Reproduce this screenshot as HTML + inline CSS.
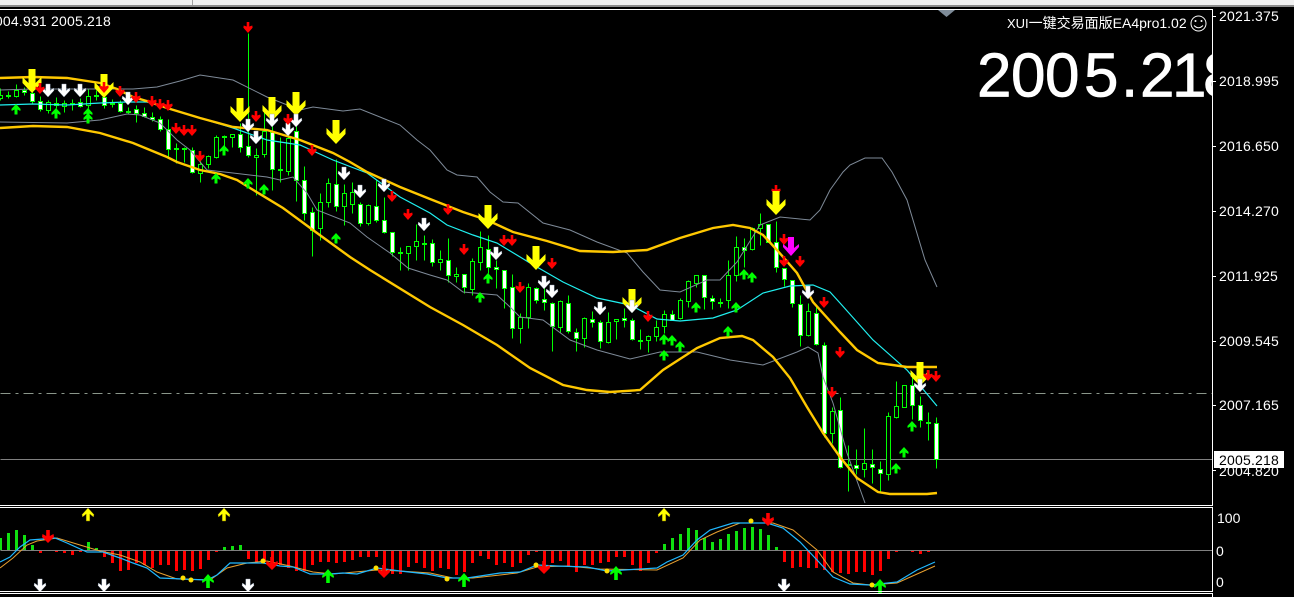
<!DOCTYPE html>
<html><head><meta charset="utf-8"><style>
html,body{margin:0;padding:0;background:#000;width:1294px;height:597px;overflow:hidden}
svg{display:block}
text{font-family:"Liberation Sans","Noto Sans CJK SC",sans-serif;fill:#fff}
</style></head><body>
<svg width="1294" height="597" viewBox="0 0 1294 597" xmlns="http://www.w3.org/2000/svg">
<defs>
<polygon id="y" points="-3.5,0 3.5,0 3.5,14 9.5,8 9.5,14 0,24 -9.5,14 -9.5,8 -3.5,14" fill="#ff0"/>
<polygon id="m" points="-3,0 3,0 3,11 8,7 8,10 0,19 -8,10 -8,7 -3,11" fill="#f0f"/>
<polygon id="w" points="-2.2,0 2.2,0 2.2,6.5 5.5,4 6,6.5 0,13 -6,6.5 -5.5,4 -2.2,6.5" fill="#fff" stroke="#8a9ab0" stroke-width=".4"/>
<polygon id="r" points="-1.3,0 1.3,0 1.3,4.5 4.3,3.5 4.6,5.8 0,11 -4.6,5.8 -4.3,3.5 -1.3,4.5" fill="#f00"/>
<polygon id="g" points="0,0 4.6,5 4.3,7 1.5,5.5 1.5,10.5 -1.5,10.5 -1.5,5.5 -4.3,7 -4.6,5" fill="#0f0"/>
<polygon id="yu" points="0,0 6,6.5 5.5,9 1.8,6 1.8,13 -1.8,13 -1.8,6 -5.5,9 -6,6.5" fill="#ff0" stroke="#807000" stroke-width=".5"/>
<polygon id="gu" points="0,0 6,7 5.5,9 1.8,6.5 1.8,14 -1.8,14 -1.8,6.5 -5.5,9 -6,7" fill="#0f0"/>
<polygon id="ru" points="-1.8,0 1.8,0 1.8,6 5.5,4 6,7 0,13 -6,7 -5.5,4 -1.8,6" fill="#f00"/>
</defs>
<rect width="1294" height="597" fill="#000"/>
<!-- toolbar strip -->
<rect width="1294" height="5" fill="#f0f0f0"/>
<rect y="5" width="1294" height="2" fill="#8c8c8c"/>
<rect x="192" y="0" width="1" height="5" fill="#a0a0a0"/>

<!-- horizontal levels -->
<g transform="translate(.5,.5)" shape-rendering="crispEdges">
<path d="M0 393H1212" stroke="#b8c8b8" stroke-width="1" stroke-dasharray="10 5 3 5" fill="none" opacity=".75"/>
<path d="M0 459H1212M0 550H1212" stroke="#808080" fill="none"/>
</g>

<!-- candles -->
<g transform="translate(.5,.5)" shape-rendering="crispEdges" stroke="#0f0" stroke-width="1">
<path fill="none" d="M0 88V100M8 91V98M16 84V97M24 87V95M32 75V103M40 96V111M48 100V113M56 97V108M64 100V112M72 99V110M80 98V107M88 89V108M96 90V100M104 83V108M112 99V107M120 100V112M128 107V114M136 105V122M144 107V117M152 112V121M160 116V131M168 119V158M176 143V163M184 147V162M192 147V173M200 160V182M208 155V168M216 135V158M224 135V147M232 134V147M240 123V152M248 33V157M256 148V195M264 112V157M272 115V190M280 137V182M288 133V175M296 113V201M304 166V220M312 207V256M320 193V240M328 178V207M336 159V211M344 184V225M352 182V213M360 202V226M368 204V225M376 180V222M384 197V233M392 232V256M400 247V270M408 246V270M416 224V260M424 235V260M432 239V266M440 250V270M448 238V282M456 267V282M464 274V293M472 258V295M480 231V270M488 235V273M496 260V288M504 270V308M512 274V338M520 313V343M528 283V328M536 287V303M544 280V310M552 302V351M560 300V332M568 295V333M576 328V351M584 317V347M592 311V327M600 320V348M608 312V343M616 319V339M624 308V327M632 318V340M640 329V349M648 335V352M656 320V341M664 310V333M672 310V320M680 298V319M688 280V307M696 275V287M704 275V309M712 295V309M720 298V307M728 260V308M736 236V281M744 238V267M752 227V250M760 213V245M768 224V242M776 221V272M784 268V286M792 280V307M800 295V346M808 303V336M816 307V345M824 342V437M832 407V443M840 397V468M848 445V491M856 449V474M864 428V477M872 449V483M880 461V493M888 412V480M896 381V418M904 385V407M912 377V419M920 396V427M928 412V440M936 417V468"/>
<path fill="#000" d="M-2 95h4V98h-4zM14 90h4V96h-4zM46 102h4V110h-4zM62 103h4V106h-4zM86 96h4V105h-4zM198 164h4V173h-4zM206 156h4V164h-4zM214 137h4V157h-4zM230 134h4V137h-4zM254 155h4V157h-4zM262 131h4V154h-4zM286 138h4V171h-4zM318 202h4V228h-4zM326 183h4V202h-4zM342 193h4V206h-4zM350 192h4V204h-4zM366 205h4V223h-4zM406 246h4V253h-4zM414 241h4V246h-4zM438 259h4V262h-4zM454 274h4V276h-4zM470 261h4V289h-4zM478 247h4V262h-4zM518 317h4V328h-4zM526 287h4V317h-4zM558 301h4V327h-4zM582 318h4V338h-4zM606 322h4V342h-4zM614 319h4V321h-4zM646 336h4V340h-4zM654 327h4V336h-4zM662 314h4V326h-4zM678 300h4V318h-4zM686 281h4V301h-4zM694 275h4V283h-4zM726 275h4V300h-4zM734 247h4V275h-4zM750 228h4V249h-4zM758 224h4V228h-4zM806 311h4V335h-4zM830 411h4V433h-4zM862 463h4V469h-4zM886 416h4V474h-4zM894 406h4V417h-4zM902 385h4V407h-4zM6 95h4V96h-4zM70 103h4V104h-4zM94 95h4V96h-4zM110 103h4V104h-4zM126 111h4V112h-4zM174 148h4V149h-4zM182 148h4V149h-4zM222 136h4V137h-4zM278 169h4V170h-4zM398 252h4V253h-4zM422 243h4V244h-4zM638 340h4V341h-4zM718 302h4V303h-4zM846 464h4V465h-4zM926 422h4V423h-4z"/>
<path fill="#fff" d="M22 90h4V92h-4zM30 93h4V101h-4zM38 101h4V109h-4zM54 103h4V105h-4zM78 102h4V106h-4zM102 97h4V105h-4zM118 103h4V111h-4zM134 109h4V113h-4zM142 113h4V116h-4zM150 117h4V119h-4zM158 119h4V129h-4zM166 129h4V149h-4zM190 150h4V172h-4zM238 134h4V147h-4zM246 146h4V155h-4zM270 132h4V169h-4zM294 131h4V180h-4zM302 180h4V213h-4zM310 212h4V230h-4zM334 184h4V206h-4zM358 204h4V223h-4zM374 206h4V220h-4zM382 220h4V232h-4zM390 232h4V252h-4zM430 243h4V262h-4zM446 260h4V275h-4zM462 274h4V287h-4zM486 249h4V267h-4zM494 267h4V269h-4zM502 270h4V288h-4zM510 287h4V328h-4zM534 288h4V300h-4zM542 299h4V302h-4zM550 303h4V326h-4zM566 303h4V331h-4zM574 332h4V338h-4zM590 319h4V322h-4zM598 322h4V341h-4zM622 318h4V320h-4zM630 320h4V339h-4zM670 314h4V320h-4zM702 275h4V297h-4zM710 298h4V301h-4zM742 247h4V250h-4zM766 224h4V242h-4zM774 242h4V267h-4zM782 268h4V279h-4zM790 280h4V303h-4zM798 304h4V335h-4zM814 313h4V344h-4zM822 345h4V433h-4zM838 410h4V467h-4zM854 465h4V468h-4zM870 464h4V467h-4zM878 469h4V473h-4zM910 385h4V405h-4zM918 405h4V420h-4zM934 423h4V459h-4z"/>
</g>

<!-- outer gray channel -->
<g fill="none" stroke="#7e8a98" stroke-width="1">
<polyline points="0,90 33,89 100,89 133,89 157,87 180,81 200,75 233,80 267,97 300,110 313,107 343,111 360,109 400,125 417,140 430,150 447,170 457,175 477,177 490,192 503,202 518,203 543,223 570,230 597,242 627,253 643,272 660,290 680,292 707,280 720,280 737,262 760,225 780,217 810,220 820,210 830,190 843,172 850,165 865,158 882,158 892,172 907,200 925,260 937,287"/>
<polyline points="0,122 67,123 100,120 127,114 140,115 160,123 177,140 190,150 207,170 233,173 267,177 280,180 293,177 307,193 317,210 350,223 367,237 390,253 408,268 430,275 447,280 463,292 497,295 510,307 520,317 543,320 570,340 597,350 630,359 660,352 697,352 730,360 763,365 797,352 808,347 818,353 823,377 833,403 847,453 865,503"/>
</g>
<!-- cyan -->
<polyline fill="none" stroke="#20f0f0" stroke-width="1.2" points="0,105 33,104 67,105 100,103 127,102 147,102 167,108 200,118 233,128 267,140 300,145 333,160 367,173 400,197 430,213 447,225 473,235 497,243 530,263 563,282 597,298 630,305 657,319 680,321 713,318 737,310 763,293 790,286 813,285 830,292 840,303 873,340 907,370 937,406"/>
<!-- yellow bands -->
<g fill="none" stroke="#ffc800" stroke-width="2.4">
<polyline points="0,78 33,77 67,78 100,83 117,89 133,97 150,102 167,108 200,118 233,127 267,130 300,140 333,153 350,162 367,172 400,187 430,199 463,212 487,220 513,232 547,241 580,251 613,252 647,250 680,238 713,228 733,225 750,228 763,235 777,250 797,273 813,302 840,332 857,350 878,363 907,367 937,367"/>
<polyline points="0,128 33,126 67,127 100,133 133,143 167,157 177,162 200,170 220,174 237,180 250,188 283,208 317,233 350,257 370,270 430,307 463,325 497,345 530,368 563,385 587,390 610,392 640,390 663,370 697,348 720,338 742,336 753,340 773,357 790,378 807,407 823,433 840,457 857,478 878,492 890,494 927,494 937,493"/>
</g>

<!-- red behind -->
<use href="#r" x="776" y="185"/>
<!-- big yellow -->
<use href="#y" x="32" y="69"/><use href="#y" x="104" y="74"/><use href="#y" x="240" y="98"/><use href="#y" x="272" y="97"/><use href="#y" x="296" y="92"/><use href="#y" x="336" y="120"/><use href="#y" x="488" y="205"/><use href="#y" x="536" y="246"/><use href="#y" x="632" y="289"/><use href="#y" x="776" y="191"/><use href="#y" x="920" y="362"/>
<!-- white -->
<use href="#w" x="48" y="84"/><use href="#w" x="64" y="84"/><use href="#w" x="80" y="84"/><use href="#w" x="128" y="92"/><use href="#w" x="248" y="119"/><use href="#w" x="256" y="131"/><use href="#w" x="272" y="114"/><use href="#w" x="288" y="123"/><use href="#w" x="296" y="114"/><use href="#w" x="344" y="167"/><use href="#w" x="360" y="185"/><use href="#w" x="384" y="179"/><use href="#w" x="424" y="218"/><use href="#w" x="496" y="247"/><use href="#w" x="544" y="276"/><use href="#w" x="552" y="285"/><use href="#w" x="600" y="302"/><use href="#w" x="632" y="300"/><use href="#w" x="808" y="286"/><use href="#w" x="920" y="379"/>
<!-- red -->
<use href="#r" x="248" y="22"/><use href="#r" x="40" y="83"/><use href="#r" x="104" y="82"/><use href="#r" x="120" y="86"/><use href="#r" x="136" y="92"/><use href="#r" x="152" y="96"/><use href="#r" x="160" y="99"/><use href="#r" x="168" y="100"/><use href="#r" x="176" y="123"/><use href="#r" x="184" y="125"/><use href="#r" x="192" y="125"/><use href="#r" x="200" y="151"/><use href="#r" x="256" y="111"/><use href="#r" x="288" y="114"/><use href="#r" x="312" y="145"/><use href="#r" x="392" y="191"/><use href="#r" x="408" y="209"/><use href="#r" x="448" y="204"/><use href="#r" x="464" y="244"/><use href="#r" x="504" y="235"/><use href="#r" x="512" y="235"/><use href="#r" x="552" y="258"/><use href="#r" x="520" y="282"/><use href="#r" x="648" y="311"/><use href="#r" x="784" y="234"/><use href="#r" x="784" y="256"/><use href="#r" x="800" y="256"/><use href="#r" x="824" y="297"/><use href="#r" x="840" y="347"/><use href="#r" x="832" y="387"/><use href="#r" x="928" y="370"/><use href="#r" x="936" y="371"/>
<use href="#m" x="791" y="237"/>
<!-- green up -->
<use href="#g" x="16" y="104"/><use href="#g" x="56" y="108"/><use href="#g" x="88" y="108"/><use href="#g" x="88" y="113"/><use href="#g" x="224" y="145"/><use href="#g" x="216" y="173"/><use href="#g" x="248" y="178"/><use href="#g" x="264" y="184"/><use href="#g" x="336" y="233"/><use href="#g" x="488" y="273"/><use href="#g" x="480" y="292"/><use href="#g" x="664" y="350"/><use href="#g" x="664" y="334"/><use href="#g" x="672" y="335"/><use href="#g" x="680" y="341"/><use href="#g" x="696" y="302"/><use href="#g" x="736" y="302"/><use href="#g" x="728" y="326"/><use href="#g" x="744" y="269"/><use href="#g" x="752" y="272"/><use href="#g" x="912" y="421"/><use href="#g" x="904" y="447"/><use href="#g" x="896" y="463"/>

<!-- big price and titles -->
<svg x="0" y="10" width="1212" height="495" viewBox="0 10 1212 495">
<text x="977 1011 1045 1084 1121 1140 1172 1203" y="96.5" font-size="62" stroke="#fff" stroke-width=".8" stroke-linejoin="round">2005.218</text>
</svg>
<text x="111" y="26" font-size="14" text-anchor="end" letter-spacing=".2">2004.931 2005.218</text>
<text x="1007" y="28" font-size="14"><tspan font-size="13">XUI</tspan>一键交易面版EA4pro1.02</text>
<g fill="none" stroke="#fff" stroke-width="1">
<circle cx="1198.5" cy="23.5" r="7.5"/>
<path d="M1194 25.5q4.5 4.5 9 0"/>
</g>
<circle cx="1195.5" cy="21" r="1" fill="#fff"/><circle cx="1201.5" cy="21" r="1" fill="#fff"/>
<polygon points="938,10 955,10 946.5,17" fill="#7f8c99"/>

<!-- sub window bars -->
<g transform="translate(.5,0)" shape-rendering="crispEdges" stroke-width="3" fill="none">
<path stroke="#10e010" d="M0 550V538M8 550V533M16 550V530M24 550V535M32 550V545M88 550V542M96 550V548M224 550V547M232 550V546M240 550V545M664 550V544M672 550V538M680 550V534M688 550V528M696 550V530M704 550V538M712 550V542M720 550V539M728 550V534M736 550V531M744 550V528M752 550V527M760 550V529M768 550V535M776 550V547"/>
<path stroke="#f00" d="M40 551V553M56 551V552M64 551V553M72 551V555M80 551V552M104 551V557M112 551V563M120 551V571M128 551V570M136 551V563M144 551V565M152 551V568M160 551V565M168 551V565M176 551V571M184 551V570M192 551V571M200 551V569M208 551V560M216 551V552M248 551V559M256 551V562M264 551V562M272 551V563M280 551V565M288 551V568M296 551V571M304 551V571M312 551V565M320 551V562M328 551V562M336 551V563M344 551V562M352 551V560M360 551V557M368 551V557M376 551V557M384 551V570M392 551V574M400 551V574M408 551V567M416 551V563M424 551V568M432 551V571M440 551V568M448 551V569M456 551V575M464 551V572M472 551V563M480 551V556M488 551V559M496 551V565M504 551V563M512 551V567M520 551V563M528 551V555M536 551V552M544 551V565M552 551V563M560 551V561M568 551V567M576 551V572M584 551V565M592 551V565M600 551V563M608 551V562M616 551V557M624 551V557M632 551V565M640 551V571M648 551V563M656 551V553M784 551V562M792 551V568M800 551V567M808 551V568M816 551V568M824 551V570M832 551V572M840 551V573M848 551V574M856 551V572M864 551V572M872 551V575M880 551V571M888 551V559M896 551V552M912 551V552M920 551V554M928 551V552"/>
</g>
<!-- sub window lines -->
<polyline fill="none" stroke="#e8a030" stroke-width="1" points="0,568 13,558 27,545 37,541 57,538 80,545 100,551 120,555 140,562 157,572 177,579 210,580 227,568 247,563 267,561 290,566 313,572 333,574 377,570 400,571 430,573 453,578 473,578 500,575 517,573 537,567 567,566 600,569 657,570 683,558 700,540 717,532 740,523 773,523 793,530 817,550 833,572 853,583 870,585 897,583 935,566"/>
<polyline fill="none" stroke="#20b8ff" stroke-width="1.2" points="0,562 10,557 20,547 30,540 43,539 55,538 67,543 87,552 103,552 120,558 133,563 147,568 160,578 183,579 207,580 217,575 230,563 247,563 263,563 280,566 293,567 310,574 330,574 343,573 357,574 377,568 400,571 427,574 447,578 467,578 500,573 520,572 537,565 557,566 587,567 607,571 657,568 667,562 683,555 697,540 710,530 733,523 767,523 783,528 800,542 817,560 833,577 850,584 870,585 897,582 917,570 935,562"/>
<g fill="#ffe000">
<circle cx="183" cy="578" r="2.5"/><circle cx="191" cy="580" r="2.5"/><circle cx="263" cy="561" r="2.5"/><circle cx="376" cy="568" r="2.5"/><circle cx="447" cy="579" r="2.5"/><circle cx="536" cy="565" r="2.5"/><circle cx="607" cy="571" r="2.5"/><circle cx="751" cy="521" r="2.5"/><circle cx="872" cy="585" r="2.5"/>
</g>
<use href="#yu" x="88" y="508"/><use href="#yu" x="224" y="508"/><use href="#yu" x="664" y="508"/>
<use href="#w" x="40" y="579"/><use href="#w" x="104" y="579"/><use href="#w" x="248" y="579"/><use href="#w" x="784" y="579"/>
<use href="#ru" x="48" y="530"/><use href="#ru" x="272" y="557"/><use href="#ru" x="384" y="565"/><use href="#ru" x="544" y="561"/><use href="#ru" x="768" y="513"/>
<use href="#gu" x="208" y="574"/><use href="#gu" x="328" y="569"/><use href="#gu" x="464" y="573"/><use href="#gu" x="616" y="566"/><use href="#gu" x="880" y="579"/>

<!-- frames -->
<g shape-rendering="crispEdges" fill="#fff">
<rect x="0" y="9" width="1213" height="1"/>
<rect x="0" y="505" width="1213" height="1"/>
<rect x="0" y="507" width="1213" height="1"/>
<rect x="0" y="591" width="1213" height="1"/>
<rect x="0" y="593" width="1213" height="1"/>
<rect x="1212" y="9" width="1" height="497"/>
<rect x="1212" y="507" width="1" height="85"/>
<rect x="1212" y="593" width="1" height="4"/>
<path d="M1213 16h3v1h-3zM1213 81h3v1h-3zM1213 146h3v1h-3zM1213 211h3v1h-3zM1213 276h3v1h-3zM1213 341h3v1h-3zM1213 405h3v1h-3zM1213 470h3v1h-3z"/>
</g>
<!-- axis labels -->
<g font-size="14" letter-spacing=".2">
<text x="1219" y="21">2021.375</text>
<text x="1219" y="86">2018.995</text>
<text x="1219" y="151">2016.650</text>
<text x="1219" y="216">2014.270</text>
<text x="1219" y="281">2011.925</text>
<text x="1219" y="346">2009.545</text>
<text x="1219" y="410">2007.165</text>
<text x="1219" y="476">2004.820</text>
</g>
<rect x="1214" y="451" width="70" height="17" fill="#fff"/>
<text x="1219" y="465" font-size="14" letter-spacing=".2" style="fill:#000">2005.218</text>
<g font-size="14">
<text x="1217" y="523">100</text>
<text x="1216" y="556">0</text>
<text x="1216" y="587">0</text>
</g>
</svg>
</body></html>
